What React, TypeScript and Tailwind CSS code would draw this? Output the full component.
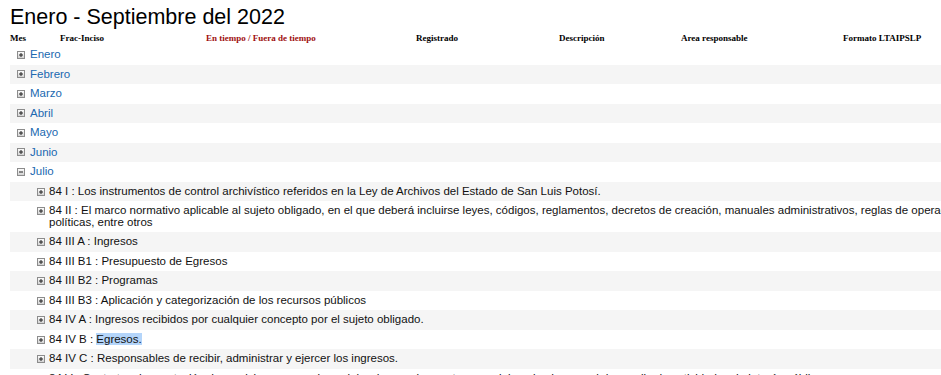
import React from "react"

const months = ["Enero", "Febrero", "Marzo", "Abril", "Mayo", "Junio"]

const fracciones: {id: string; label: React.ReactNode}[] = [
    {id: "84 I", label: "Los instrumentos de control archivístico referidos en la Ley de Archivos del Estado de San Luis Potosí."},
    {
        id: "84 II",
        label: (
            <>
                El marco normativo aplicable al sujeto obligado, en el que deberá incluirse leyes, códigos, reglamentos, decretos de creación, manuales administrativos, reglas de operación, criterios,
                <br/>
                políticas, entre otros
            </>
        ),
    },
    {id: "84 III A", label: "Ingresos"},
    {id: "84 III B1", label: "Presupuesto de Egresos"},
    {id: "84 III B2", label: "Programas"},
    {id: "84 III B3", label: "Aplicación y categorización de los recursos públicos"},
    {id: "84 IV A", label: "Ingresos recibidos por cualquier concepto por el sujeto obligado."},
    {id: "84 IV B", label: <span className="bg-[#b4d5fa]">Egresos.</span>},
    {id: "84 IV C", label: "Responsables de recibir, administrar y ejercer los ingresos."},
    {id: "84 V", label: "Contratos de prestación de servicios y convenios celebrados con los sectores social y privado para el desarrollo de actividades de interés público."},
]

function ToggleIcon({open = false}: {open?: boolean}) {
    return (
        <svg width="8" height="8" viewBox="0 0 8 8" className="shrink-0">
            <defs>
                <linearGradient id="tg" x1="0" y1="0" x2="0" y2="1">
                    <stop offset="0" stopColor="#ffffff"/>
                    <stop offset="1" stopColor="#cfcfcf"/>
                </linearGradient>
            </defs>
            <rect x="0.5" y="0.5" width="7" height="7" fill="url(#tg)" stroke="#8c8c8c"/>
            <path d="M2 4h4" stroke="#222" strokeWidth="1"/>
            {!open && <path d="M4 2v4" stroke="#222" strokeWidth="1"/>}
        </svg>
    )
}

export default function App() {
    return (
        <div className="w-[941px] h-[375px] overflow-hidden bg-white font-['Liberation_Sans',Arial,sans-serif]">
            <h1 className="pl-[10px] pt-[5px] text-[21.5px] leading-[24px] text-black">Enero - Septiembre del 2022</h1>

            <div className="mt-[4px] flex pl-[10px] font-['Liberation_Serif','Times_New_Roman',serif] text-[9px] leading-[11px] font-bold text-black">
                <span className="w-[50px]">Mes</span>
                <span className="w-[146px]">Frac-Inciso</span>
                <span className="w-[210px] text-[#a01010]">En tiempo / Fuera de tiempo</span>
                <span className="w-[143px]">Registrado</span>
                <span className="w-[122px]">Descripción</span>
                <span className="w-[163px]">Area responsable</span>
                <span className="-ml-px">Formato LTAIPSLP</span>
            </div>

            <ul className="mt-px ml-[10px] w-[1100px] text-[11.5px] leading-[11.5px]">
                {months.map((m, i) => (
                    <li key={m} className={`flex items-center gap-[5px] py-[4px] pl-[7px] ${i % 2 === 1 ? "bg-[#f5f5f5]" : ""}`}>
                        <ToggleIcon/>
                        <a className="text-[#2068b0] cursor-pointer">{m}</a>
                    </li>
                ))}
                <li>
                    <div className="flex items-center gap-[5px] py-[4px] pl-[7px]">
                        <ToggleIcon open/>
                        <a className="text-[#2068b0] cursor-pointer">Julio</a>
                    </div>
                    <ul className="text-[#111]">
                        {fracciones.map((f, i) => (
                            <li key={f.id} className={`flex items-start gap-[4px] py-[4px] pl-[27px] ${i % 2 === 0 ? "bg-[#f5f5f5]" : ""}`}>
                                <span className="mt-[2px]"><ToggleIcon/></span>
                                <span className="whitespace-nowrap">
                                    {f.id} : {f.label}
                                </span>
                            </li>
                        ))}
                    </ul>
                </li>
            </ul>
        </div>
    )
}
